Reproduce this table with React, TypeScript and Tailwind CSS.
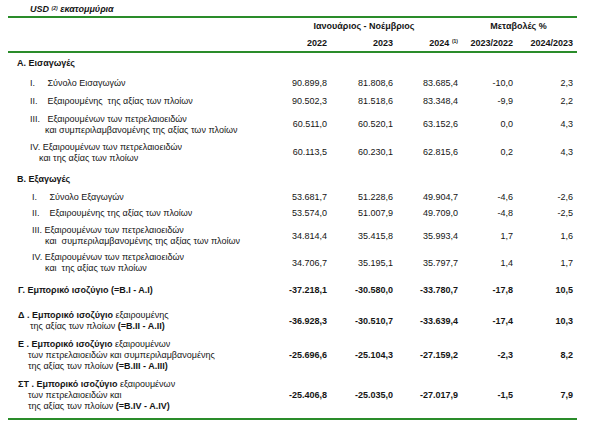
const cols = "grid grid-cols-[262px_57px_66px_65px_55px_60px] items-center";

type Row = {
  label: React.ReactNode;
  values: string[];
  h: string;
  bold?: boolean;
};

function Num({ n }: { n: string }) {
  return <span className="inline-block w-[15px]">{n}</span>;
}

const rows: Row[] = [
  { label: <div className="pl-[9px] font-bold">Α. Εισαγωγές</div>, values: [], h: "h-[21px]" },
  {
    label: <div className="pl-[22px]"><Num n="I." /> Σύνολο Εισαγωγών</div>,
    values: ["90.899,8", "81.808,6", "83.685,4", "-10,0", "2,3"],
    h: "h-[18px]",
  },
  {
    label: <div className="pl-[22px]"><Num n="II." /> Εξαιρουμένης&nbsp; της αξίας των πλοίων</div>,
    values: ["90.502,3", "81.518,6", "83.348,4", "-9,9", "2,2"],
    h: "h-[18px]",
  },
  {
    label: (
      <div className="pl-[22px]">
        <div><Num n="III." /> Εξαιρουμένων των πετρελαιοειδών</div>
        <div className="pl-[15px]">και συμπεριλαμβανομένης της αξίας των πλοίων</div>
      </div>
    ),
    values: ["60.511,0", "60.520,1", "63.152,6", "0,0", "4,3"],
    h: "h-[29px]",
  },
  {
    label: (
      <div className="pl-[22px]">
        <div>IV. Εξαιρουμένων των πετρελαιοειδών</div>
        <div className="pl-[9px]">και της αξίας των πλοίων</div>
      </div>
    ),
    values: ["60.113,5", "60.230,1", "62.815,6", "0,2", "4,3"],
    h: "h-[27px]",
  },
  { label: <div className="pl-[9px] font-bold">Β. Εξαγωγές</div>, values: [], h: "h-[23px] pt-[3px]" },
  {
    label: <div className="pl-[24px]"><Num n="I." /> Σύνολο Εξαγωγών</div>,
    values: ["53.681,7", "51.228,6", "49.904,7", "-4,6", "-2,6"],
    h: "h-[16px]",
  },
  {
    label: <div className="pl-[24px]"><Num n="II." /> Εξαιρουμένης της αξίας των πλοίων</div>,
    values: ["53.574,0", "51.007,9", "49.709,0", "-4,8", "-2,5"],
    h: "h-[17px]",
  },
  {
    label: (
      <div className="pl-[24px]">
        <div>III. Εξαιρουμένων των πετρελαιοειδών</div>
        <div className="pl-[13px]">και&nbsp; συμπεριλαμβανομένης της αξίας των πλοίων</div>
      </div>
    ),
    values: ["34.814,4", "35.415,8", "35.993,4", "1,7", "1,6"],
    h: "h-[28px]",
  },
  {
    label: (
      <div className="pl-[24px]">
        <div>IV. Εξαιρουμένων των πετρελαιοειδών</div>
        <div className="pl-[13px]">και&nbsp; της αξίας των πλοίων</div>
      </div>
    ),
    values: ["34.706,7", "35.195,1", "35.797,7", "1,4", "1,7"],
    h: "h-[26px]",
  },
  {
    label: <div className="pl-[10px] font-bold">Γ. Εμπορικό ισοζύγιο (=B.I - A.I)</div>,
    values: ["-37.218,1", "-30.580,0", "-33.780,7", "-17,8", "10,5"],
    h: "h-[28px]",
    bold: true,
  },
  {
    label: (
      <div className="pl-[10px]">
        <div><b>Δ . Εμπορικό ισοζύγιο</b> εξαιρουμένης</div>
        <div className="pl-[12px]">της αξίας των πλοίων <b>(=B.II - A.II)</b></div>
      </div>
    ),
    values: ["-36.928,3", "-30.510,7", "-33.639,4", "-17,4", "10,3"],
    h: "h-[34px]",
    bold: true,
  },
  {
    label: (
      <div className="pl-[10px]">
        <div><b>Ε . Εμπορικό ισοζύγιο</b> εξαιρουμένων</div>
        <div className="pl-[10px]">των πετρελαιοειδών και συμπεριλαμβανομένης</div>
        <div className="pl-[10px]">της αξίας των πλοίων <b>(=B.III - A.III)</b></div>
      </div>
    ),
    values: ["-25.696,6", "-25.104,3", "-27.159,2", "-2,3", "8,2"],
    h: "h-[34px]",
    bold: true,
  },
  {
    label: (
      <div className="pl-[10px]">
        <div><b>ΣΤ . Εμπορικό ισοζύγιο</b> εξαιρουμένων</div>
        <div className="pl-[10px]">των πετρελαιοειδών και</div>
        <div className="pl-[10px]">της αξίας των πλοίων <b>(=B.IV - A.IV)</b></div>
      </div>
    ),
    values: ["-25.406,8", "-25.035,0", "-27.017,9", "-1,5", "7,9"],
    h: "h-[46px]",
    bold: true,
  },
];

export default function App() {
  return (
    <div className="w-[600px] h-[423px] bg-white text-[#151515] text-[9px] leading-[11px] font-['Liberation_Sans',Arial,sans-serif] overflow-hidden">
      <div className="h-[16px] pl-[30px] pt-[4px] font-bold italic">
        USD <sup className="text-[5px]">(2)</sup> εκατομμύρια
      </div>
      <div className="ml-[8px] w-[569px]">
        <div className="border-t-2 border-b-2 border-[#2a8c2a]">
          <div className={`${cols} h-[17px] font-bold`}>
            <div />
            <div className="col-span-3 text-center">Ιανουάριος - Νοέμβριος</div>
            <div className="col-span-2 text-center pl-[6px]">Μεταβολές %</div>
          </div>
          <div className={`${cols} h-[16px] font-bold text-right`}>
            <div />
            <div>2022</div>
            <div>2023</div>
            <div>
              2024 <sup className="text-[5px]">(1)</sup>
            </div>
            <div className="pr-[-2px]">2023/2022</div>
            <div>2024/2023</div>
          </div>
        </div>
        <div className="border-b-2 border-[#2a8c2a]">
          {rows.map((r, i) => (
            <div key={i} className={`${cols} ${r.h}`}>
              {r.label}
              {r.values.map((v, j) => (
                <div key={j} className={`text-right ${r.bold ? "font-bold" : ""}`}>
                  {v}
                </div>
              ))}
            </div>
          ))}
        </div>
      </div>
    </div>
  );
}
